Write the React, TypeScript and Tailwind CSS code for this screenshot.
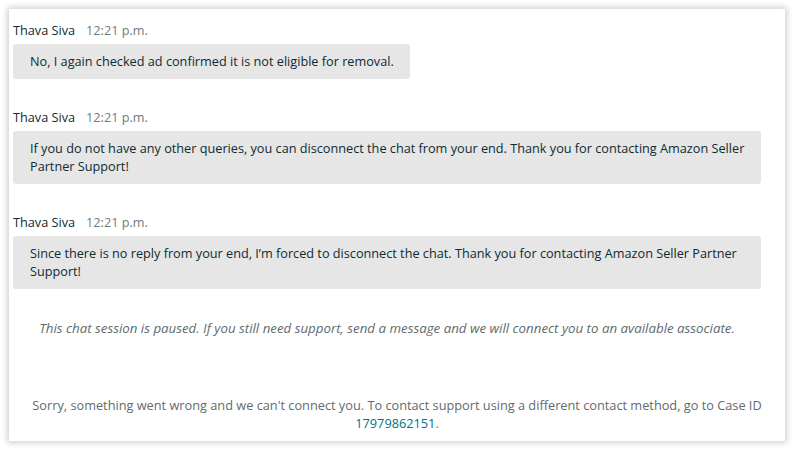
import React from "react";

const messages = [
  "No, I again checked ad confirmed it is not eligible for removal.",
  "If you do not have any other queries, you can disconnect the chat from your end. Thank you for contacting Amazon Seller Partner Support!",
  "Since there is no reply from your end, I\u2019m forced to disconnect the chat. Thank you for contacting Amazon Seller Partner Support!",
];

function Message({ text, first }: { text: string; first?: boolean }) {
  return (
    <div className={first ? "" : "mt-[29px]"}>
      <div className="flex items-center h-[18px] leading-[18px] text-[12.7px]">
        <span className="text-[#0f2b30]">Thava Siva</span>
        <span className="ml-[11px] text-[#6f7b7d]">12:21 p.m.</span>
      </div>
      <div className="mt-[5px] w-fit bg-[#e6e6e6] rounded-[3px] pl-[17px] pr-[16px] pt-[8px] pb-[9px] text-[12.7px] leading-[18px] text-[#0f2b30]">
        {text}
      </div>
    </div>
  );
}

export default function App() {
  return (
    <div className="w-[794px] h-[449px] bg-white p-[9px] pb-[8px] font-['Open_Sans',sans-serif]">
      <div className="h-full bg-white shadow-[0_0_6px_2px_rgba(0,0,0,0.18)] pt-[12px]">
        <div className="pl-[4px] pr-[24px]">
          {messages.map((m, i) => (
            <Message key={i} text={m} first={i === 0} />
          ))}
          <p className="mt-[30px] text-center italic text-[13.3px] leading-[18px] text-[#5f6b6d]">
            This chat session is paused. If you still need support, send a message and we will connect you to an available associate.
          </p>
        </div>
        <p className="mt-[59px] text-center text-[12.75px] leading-[18px] text-[#5f6b6d]">
          Sorry, something went wrong and we can't connect you. To contact support using a different contact method, go to Case ID
          <br />
          <span className="text-[#007185]">17979862151</span>.
        </p>
      </div>
    </div>
  );
}
